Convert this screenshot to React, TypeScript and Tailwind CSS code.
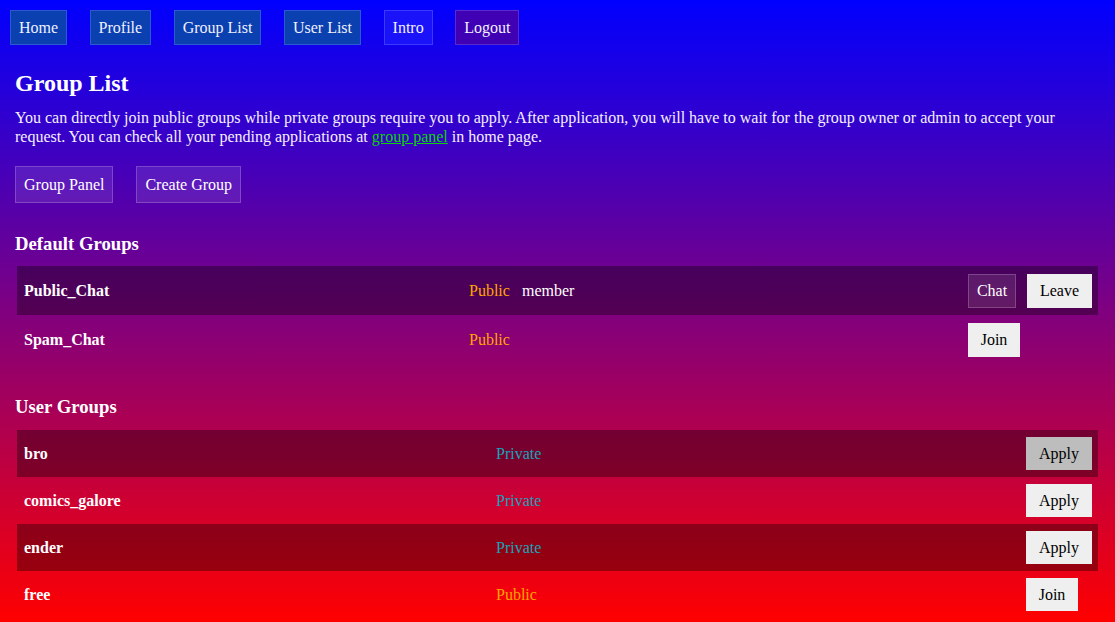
import React from "react";

const navItems = [
  { label: "Home", cls: "bg-[#0a40b0] border-[#2a5ad0]" },
  { label: "Profile", cls: "bg-[#0a40b0] border-[#2a5ad0]" },
  { label: "Group List", cls: "bg-[#0a40b0] border-[#2a5ad0]" },
  { label: "User List", cls: "bg-[#0a40b0] border-[#2a5ad0]" },
  { label: "Intro", cls: "bg-[#1a12f8] border-[#3a3aff]" },
  { label: "Logout", cls: "bg-[#4000b4] border-[#5a2ad0]" },
];

const userGroups = [
  { name: "bro", type: "Private", action: "Apply", dark: true, gray: true },
  { name: "comics_galore", type: "Private", action: "Apply", dark: false },
  { name: "ender", type: "Private", action: "Apply", dark: true },
  { name: "free", type: "Public", action: "Join", dark: false },
];

export default function App() {
  return (
    <div
      className="h-[622px] overflow-hidden bg-[linear-gradient(to_bottom,#0000ff,#ff0000)] text-white text-[16px]"
      style={{ fontFamily: '"Liberation Serif", "Times New Roman", serif' }}
    >
      <nav className="flex gap-[22.5px] p-[10px]">
        {navItems.map((n) => (
          <div
            key={n.label}
            className={`h-[35px] px-[8px] flex items-center border ${n.cls} text-[#f0f0ff]`}
          >
            {n.label}
          </div>
        ))}
      </nav>

      <main className="px-[15px] pt-[14px]">
        <h2 className="text-[24px] font-bold leading-[28px]">Group List</h2>
        <p className="mt-[11px] leading-[19px] text-[#f4f0ff]">
          You can directly join public groups while private groups require you to apply. After application, you will have to wait for the group owner or admin to accept your request. You can check all your pending applications at{" "}
          <span className="text-[#0bd40b] underline">group panel</span> in home page.
        </p>

        <div className="flex gap-[23px] mt-[20px]">
          <div className="h-[37px] px-[8px] flex items-center bg-white/10 border border-white/20">Group Panel</div>
          <div className="h-[37px] px-[8px] flex items-center bg-white/10 border border-white/20">Create Group</div>
        </div>

        <h3 className="mt-[30px] text-[18.72px] font-bold leading-[22px]">Default Groups</h3>
        <div className="mx-[2px] mt-[11px]">
          <div className="flex items-center h-[49px] bg-black/35">
            <div className="w-[445px] pl-[7px] font-bold">Public_Chat</div>
            <div className="w-[53px] pl-[7px] text-[#ffa500]">Public</div>
            <div className="flex-1 pl-[7px]">member</div>
            <div className="w-[137px] pl-[7px] flex items-center gap-[11px]">
              <div className="h-[34px] w-[48px] flex items-center justify-center bg-white/10 border border-white/20">Chat</div>
              <div className="h-[34px] w-[65px] flex items-center justify-center bg-[#efefef] text-black mt-[1px]">Leave</div>
            </div>
          </div>
          <div className="flex items-center h-[49px]">
            <div className="w-[445px] pl-[7px] font-bold">Spam_Chat</div>
            <div className="w-[53px] pl-[7px] text-[#ffa500]">Public</div>
            <div className="flex-1 pl-[7px]"></div>
            <div className="w-[137px] pl-[7px] flex items-center">
              <div className="h-[34px] w-[52px] flex items-center justify-center bg-[#efefef] text-black">Join</div>
            </div>
          </div>
        </div>

        <h3 className="mt-[32px] text-[18.72px] font-bold leading-[22px]">User Groups</h3>
        <div className="mx-[2px] mt-[12px]">
          {userGroups.map((g) => (
            <div key={g.name} className={`flex items-center h-[47px] ${g.dark ? "bg-black/35" : ""}`}>
              <div className="w-[472px] pl-[7px] font-bold">{g.name}</div>
              <div className={`flex-1 pl-[7px] ${g.type === "Private" ? "text-[#17a2b8]" : "text-[#ffa500]"}`}>{g.type}</div>
              <div className="w-[79px] pl-[7px] flex items-center">
                <div
                  className={`h-[33px] ${g.action === "Apply" ? "w-[66px]" : "w-[52px]"} flex items-center justify-center text-black ${g.gray ? "bg-[#bdbdbd]" : "bg-[#efefef]"}`}
                >
                  {g.action}
                </div>
              </div>
            </div>
          ))}
        </div>
      </main>
    </div>
  );
}
